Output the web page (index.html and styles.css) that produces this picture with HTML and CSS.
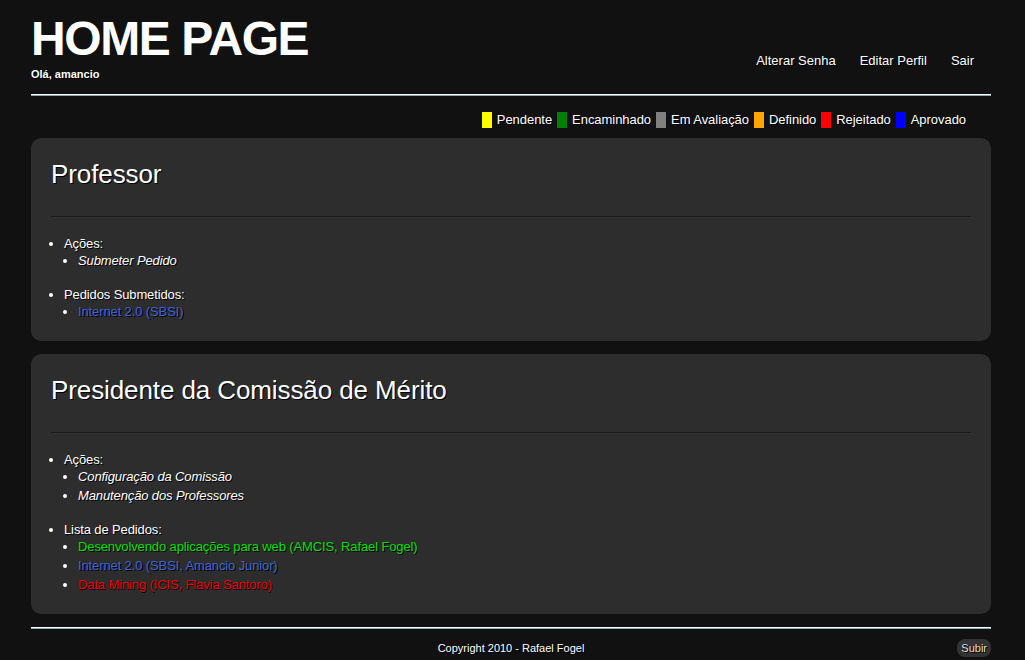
FILE: index.html
```html
<!DOCTYPE html>
<html lang="pt">
<head>
<meta charset="utf-8">
<title>Home Page</title>
<link rel="stylesheet" href="styles.css">
</head>
<body>
<div class="wrap">
  <header class="header">
    <div class="brand">
      <h1 class="title">HOME PAGE</h1>
      <div class="hello">Olá, amancio</div>
    </div>
    <nav class="nav">
      <a href="#">Alterar Senha</a>
      <a href="#">Editar Perfil</a>
      <a href="#">Sair</a>
    </nav>
  </header>
  <div class="rule"></div>

  <div class="legend">
    <span class="sw yellow"></span><span class="lbl">Pendente</span>
    <span class="sw green"></span><span class="lbl">Encaminhado</span>
    <span class="sw gray"></span><span class="lbl">Em Avaliação</span>
    <span class="sw orange"></span><span class="lbl">Definido</span>
    <span class="sw red"></span><span class="lbl">Rejeitado</span>
    <span class="sw blue"></span><span class="lbl">Aprovado</span>
  </div>

  <section class="card">
    <h2 class="card-title">Professor</h2>
    <div class="card-rule"></div>
    <ul class="list">
      <li>Ações:
        <ul class="sub">
          <li><a class="action" href="#">Submeter Pedido</a></li>
        </ul>
      </li>
      <li>Pedidos Submetidos:
        <ul class="sub">
          <li><a class="req req-blue" href="#">Internet 2.0 (SBSI)</a></li>
        </ul>
      </li>
    </ul>
  </section>

  <section class="card">
    <h2 class="card-title">Presidente da Comissão de Mérito</h2>
    <div class="card-rule"></div>
    <ul class="list">
      <li>Ações:
        <ul class="sub">
          <li><a class="action" href="#">Configuração da Comissão</a></li>
          <li><a class="action" href="#">Manutenção dos Professores</a></li>
        </ul>
      </li>
      <li>Lista de Pedidos:
        <ul class="sub">
          <li><a class="req req-green" href="#">Desenvolvendo aplicações para web (AMCIS, Rafael Fogel)</a></li>
          <li><a class="req req-blue" href="#">Internet 2.0 (SBSI, Amancio Junior)</a></li>
          <li><a class="req req-red" href="#">Data Mining (ICIS, Flavia Santoro)</a></li>
        </ul>
      </li>
    </ul>
  </section>

  <div class="rule footer-rule"></div>
  <footer class="footer">
    <span></span>
    <span class="copy">Copyright 2010 - Rafael Fogel</span>
    <a class="up" href="#">Subir</a>
  </footer>
</div>
</body>
</html>
```

FILE: styles.css
```css
html, body {
  margin: 0;
  padding: 0;
  background: #111111;
}

body {
  font-family: "Liberation Sans", Arial, sans-serif;
  color: #ffffff;
  text-shadow: 1px 1px 0 #000;
}

a {
  text-decoration: none;
  color: inherit;
}

.wrap {
  width: 960px;
  margin: 0 31px;
}

.header {
  display: flex;
  justify-content: space-between;
  align-items: flex-start;
  padding-top: 15px;
  padding-bottom: 13px;
}

.title {
  margin: 0;
  font-size: 48px;
  line-height: 48px;
  font-weight: bold;
  letter-spacing: -1.4px;
  text-shadow: none;
}

.hello {
  margin-top: 4px;
  font-size: 11px;
  line-height: 14px;
  font-weight: bold;
}

.nav {
  display: flex;
  gap: 24px;
  margin-top: 38px;
  padding-right: 17px;
  font-size: 13px;
  line-height: 16px;
}

.rule {
  height: 0;
  border-top: 1px solid #ffffff;
  border-bottom: 1px solid #8fa9b3;
}

.legend {
  display: flex;
  justify-content: flex-end;
  align-items: center;
  margin-top: 16px;
  margin-bottom: 10px;
  padding-right: 25px;
  font-size: 13px;
  line-height: 16px;
  letter-spacing: -0.05px;
}

.sw {
  width: 10px;
  height: 16px;
  margin-right: 5px;
}

.lbl {
  margin-right: 5px;
}

.lbl:last-child {
  margin-right: 0;
}

.yellow { background: #ffff00; }
.green { background: #008000; }
.gray { background: #808080; }
.orange { background: #ffa500; }
.red { background: #ff0000; }
.blue { background: #0000ff; }

.card {
  background: #2d2d2d;
  border-radius: 10px;
  padding: 21px 20px 21px;
  margin-bottom: 13px;
}

.card-title {
  margin: 0;
  font-size: 26px;
  line-height: 30px;
  font-weight: normal;
  letter-spacing: -0.1px;
}

.card-rule {
  margin-top: 27px;
  height: 0;
  border-top: 1px solid #1a1a1a;
  border-bottom: 1px solid #333333;
}

.list {
  list-style: disc;
  margin: 17px 0 0;
  padding-left: 13px;
  font-size: 13px;
  line-height: 17px;
  letter-spacing: -0.12px;
}

.list > li + li {
  margin-top: 17px;
}

.sub {
  list-style: disc;
  margin: 0;
  padding-left: 14px;
}

.sub > li + li {
  margin-top: 2px;
}

.action {
  font-style: italic;
}

.req-blue { color: #3d64d8; }
.req-green { color: #00e000; }
.req-red { color: #f00000; }

.footer {
  display: grid;
  grid-template-columns: 1fr auto 1fr;
  align-items: center;
  margin-top: 10px;
}

.copy {
  font-size: 11px;
  line-height: 18px;
}

.up {
  justify-self: end;
  background: #333333;
  color: #dddddd;
  border-radius: 8px;
  font-size: 11px;
  line-height: 18px;
  padding: 0 4px;
}
```
